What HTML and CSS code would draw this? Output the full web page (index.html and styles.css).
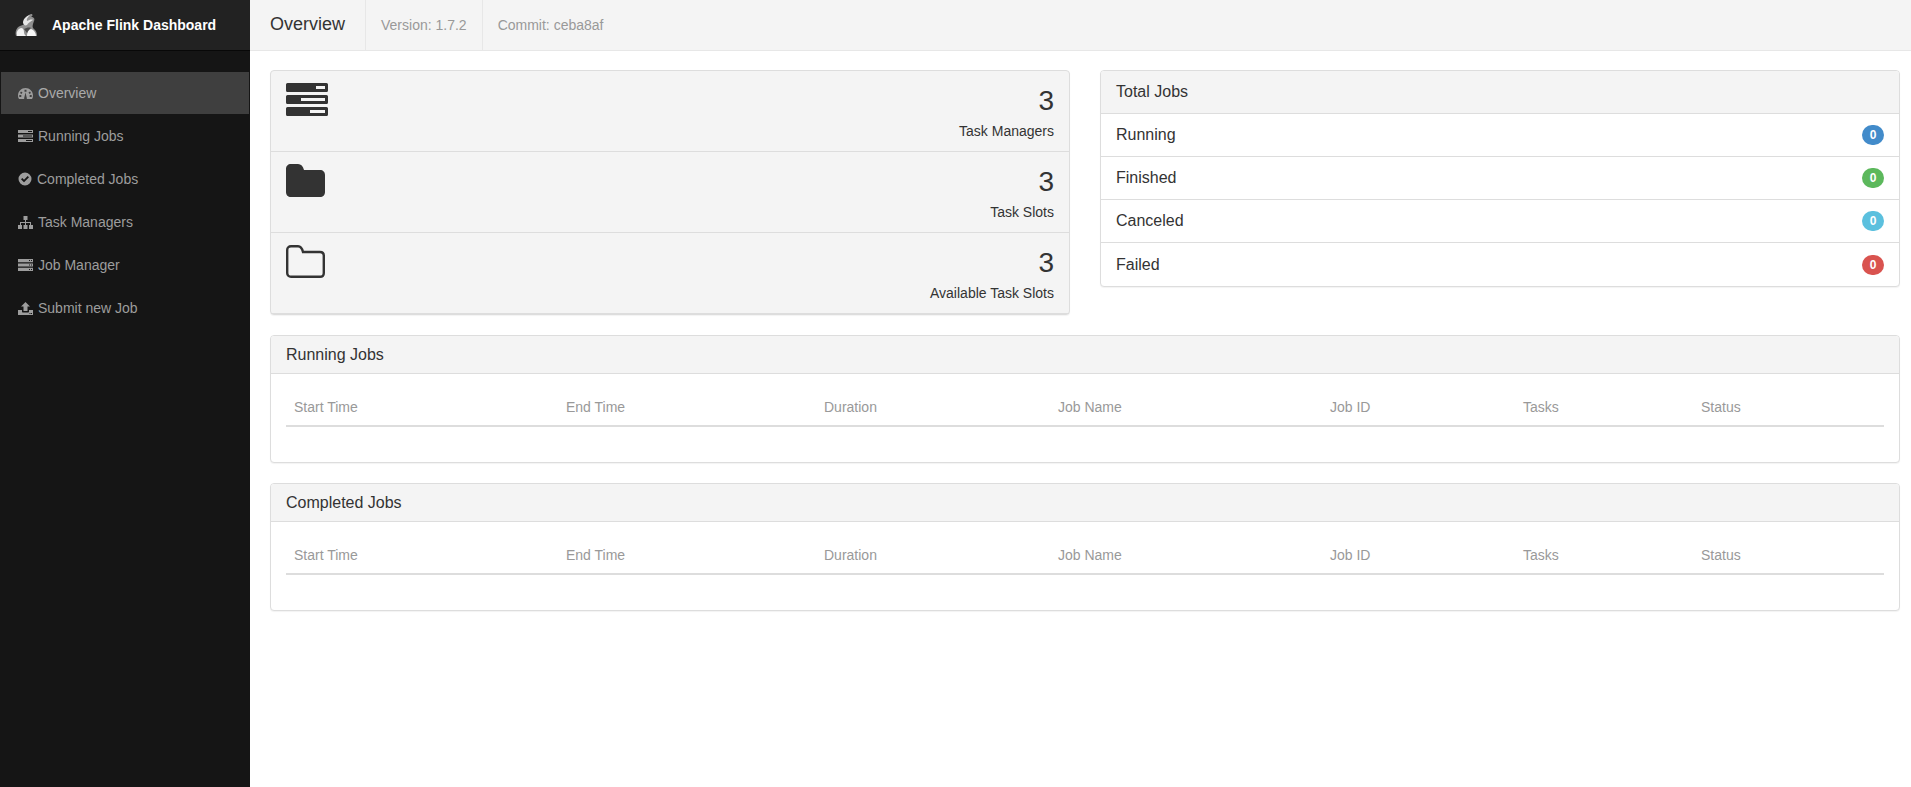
FILE: index.html
```html
<!DOCTYPE html>
<html lang="en">
<head>
    <meta charset="UTF-8">
    <meta name="viewport" content="width=device-width, initial-scale=1.0">
    <title>Apache Flink Dashboard</title>
    <link rel="stylesheet" href="styles.css">
</head>
<body>
    <aside class="sidebar">
        <div class="brand">
            <svg class="brand-logo" viewBox="0 0 22 22" width="22" height="22">
                <path fill="#8f8f8f" d="M1 22c-1-4 0-8 4-10 3-1 5-2 5-4 0-4 3-7 6-8 2 0 2 2 0 3 3 0 4 2 3 4-1 3-2 5-1 7 2 2 4 3 4 8z"/>
                <path fill="#e6e6e6" d="M8 9c0-4 3-7 7-8-2 2-4 4-3 6 2-1 5-2 6-1-2 1-5 3-6 5-2 1-3 0-4-2z"/>
                <path fill="#f2f2f2" d="M2 21c-1-3 1-6 4-7 2 0 3 2 3 4 0 2 1 3 2 4H2z"/>
                <path fill="#f7f7f7" d="M12 22c0-3 1-6 4-7 3 1 5 4 5 7z"/>
                <path fill="#4a4a4a" d="M9 15c2-1 5-2 7-1-2 1-3 3-4 5-1-1-2-3-3-4z"/>
            </svg>
            <span class="brand-name">Apache Flink Dashboard</span>
        </div>
        <ul class="nav">
            <li><a class="nav-link active" href="#">
                <svg class="nav-icon" viewBox="0 0 15 11" width="15" height="11"><path fill-rule="evenodd" d="M7.5 0C3.4 0 0 3.3 0 7.4c0 1.300.3 2.500 1 3.600h13c.7-1.100 1-2.300 1-3.600C15 3.300 11.600 0 7.500 0zM6.500 1.700h2v2h-2zM3 3.400l1.500 1-1 1.500L2 5zM12 3.400L13 5l-1.500.9-1-1.500zM1.300 7h2v2h-2zM11.700 7h2v2h-2zM6.300 9.500l1.200-5 1.200 5a1.300 1.300 0 1 1-2.400 0z"/></svg>
                Overview</a></li>
            <li><a class="nav-link" href="#">
                <svg class="nav-icon" viewBox="0 0 15 12" width="15" height="12"><path fill-rule="evenodd" d="M0 0h15v3H0zM10 1v1h4V1zM0 4.500h15v3H0zM5 5.500v1h9v-1zM0 9h15v3H0zM8 10v1h6v-1z"/></svg>
                Running Jobs</a></li>
            <li><a class="nav-link" href="#">
                <svg class="nav-icon" viewBox="0 0 14 14" width="14" height="14"><path fill-rule="evenodd" d="M7 .5a6.500 6.500 0 1 1 0 13 6.500 6.500 0 0 1 0-13zM6 10.300l5-5-1.300-1.300L6 7.700 4.300 6 3 7.300z"/></svg>
                Completed Jobs</a></li>
            <li><a class="nav-link" href="#">
                <svg class="nav-icon" viewBox="0 0 15 13" width="15" height="13"><path d="M5.500 0h4v4H8v2h5v3h2v4h-4V9h1V7H8v2h1.500v4h-4V9H7V7H3v2h1v4H0V9h2V6h5V4H5.500z"/></svg>
                Task Managers</a></li>
            <li><a class="nav-link" href="#">
                <svg class="nav-icon" viewBox="0 0 15 12" width="15" height="12"><path fill-rule="evenodd" d="M0 0h15v3.200H0zM11 1v1h1V1zM13 1v1h1V1zM0 4.400h15v3.200H0zM11 5.500v1h1v-1zM13 5.500v1h1v-1zM0 8.800h15V12H0zM11 10v1h1v-1zM13 10v1h1v-1z"/></svg>
                Job Manager</a></li>
            <li><a class="nav-link" href="#">
                <svg class="nav-icon" viewBox="0 0 15 13" width="15" height="13"><path fill-rule="evenodd" d="M7.500 0L12 4.500H9.500V9h-4V4.500H3zM0 8h4v1.500c0 .6.400 1 1 1h5c.6 0 1-.4 1-1V8h4v5H0zM11.500 11v1h1v-1zM13 11v1h1v-1z"/></svg>
                Submit new Job</a></li>
        </ul>
    </aside>

    <div class="page">
        <header class="topbar">
            <h1 class="topbar-title">Overview</h1>
            <span class="topbar-info">Version: 1.7.2</span>
            <span class="topbar-info">Commit: ceba8af</span>
        </header>

        <main class="content">
            <div class="summary">
                <div class="panel stats">
                    <div class="stat">
                        <svg class="stat-icon" viewBox="0 0 42 33" width="42" height="33">
                            <path fill="#333" fill-rule="evenodd" d="M1.500 0h39A1.500 1.500 0 0 1 42 1.500v6A1.500 1.500 0 0 1 40.500 9h-39A1.500 1.500 0 0 1 0 7.500v-6A1.500 1.500 0 0 1 1.500 0zM30 3v3h9V3zM1.500 12h39a1.500 1.500 0 0 1 1.500 1.500v6a1.500 1.500 0 0 1-1.500 1.500h-39A1.500 1.500 0 0 1 0 19.500v-6A1.500 1.500 0 0 1 1.500 12zM15 15v3h24v-3zM1.500 24h39a1.500 1.500 0 0 1 1.500 1.500v6a1.500 1.500 0 0 1-1.500 1.500h-39A1.500 1.500 0 0 1 0 31.500v-6A1.500 1.500 0 0 1 1.500 24zM24 27v3h15v-3z"/>
                        </svg>
                        <div class="stat-text">
                            <div class="stat-number">3</div>
                            <div class="stat-label">Task Managers</div>
                        </div>
                    </div>
                    <div class="stat">
                        <svg class="stat-icon" viewBox="0 0 39 33" width="39" height="33">
                            <path fill="#333" d="M5 0h7c3 0 5 2 6 6h16c3 0 5 2 5 5v17c0 3-2 5-5 5H5c-3 0-5-2-5-5V5c0-3 2-5 5-5z"/>
                        </svg>
                        <div class="stat-text">
                            <div class="stat-number">3</div>
                            <div class="stat-label">Task Slots</div>
                        </div>
                    </div>
                    <div class="stat">
                        <svg class="stat-icon" viewBox="0 0 39 33" width="39" height="33">
                            <path fill="none" stroke="#333" stroke-width="2.400" d="M5 1.200h7c2.500 0 4 1.500 5 5.800h17c2.200 0 3.800 1.600 3.800 3.800V28c0 2.200-1.600 3.800-3.800 3.800H5c-2.200 0-3.800-1.600-3.800-3.800V5c0-2.200 1.600-3.800 3.800-3.800z"/>
                        </svg>
                        <div class="stat-text">
                            <div class="stat-number">3</div>
                            <div class="stat-label">Available Task Slots</div>
                        </div>
                    </div>
                </div>

                <div class="panel totals">
                    <div class="panel-heading tall">Total Jobs</div>
                    <div class="total-row">Running <span class="badge running">0</span></div>
                    <div class="total-row">Finished <span class="badge finished">0</span></div>
                    <div class="total-row">Canceled <span class="badge canceled">0</span></div>
                    <div class="total-row">Failed <span class="badge failed">0</span></div>
                </div>
            </div>

            <section class="panel jobs">
                <div class="panel-heading">Running Jobs</div>
                <div class="panel-body">
                    <table class="jobs-table">
                        <colgroup>
                            <col class="col-start"><col class="col-end"><col class="col-duration"><col class="col-name"><col class="col-id"><col class="col-tasks"><col class="col-status">
                        </colgroup>
                        <thead>
                            <tr><th>Start Time</th><th>End Time</th><th>Duration</th><th>Job Name</th><th>Job ID</th><th>Tasks</th><th>Status</th></tr>
                        </thead>
                    </table>
                </div>
            </section>

            <section class="panel jobs">
                <div class="panel-heading">Completed Jobs</div>
                <div class="panel-body">
                    <table class="jobs-table">
                        <colgroup>
                            <col class="col-start"><col class="col-end"><col class="col-duration"><col class="col-name"><col class="col-id"><col class="col-tasks"><col class="col-status">
                        </colgroup>
                        <thead>
                            <tr><th>Start Time</th><th>End Time</th><th>Duration</th><th>Job Name</th><th>Job ID</th><th>Tasks</th><th>Status</th></tr>
                        </thead>
                    </table>
                </div>
            </section>
        </main>
    </div>
</body>
</html>
```

FILE: styles.css
```css
* {
    box-sizing: border-box;
}

html,
body {
    height: 100%;
}

body {
    margin: 0;
    display: flex;
    font-family: "Liberation Sans", Arial, sans-serif;
    font-size: 14px;
    line-height: 20px;
    color: #333;
    background-color: #fff;
    overflow: hidden;
}

/* sidebar */
.sidebar {
    width: 250px;
    flex-shrink: 0;
    background-color: #151515;
}

.brand {
    display: flex;
    align-items: center;
    height: 51px;
    padding-left: 15px;
    background-color: #222;
    border-bottom: 1px solid #080808;
}

.brand-logo {
    margin-right: 15px;
}

.brand-name {
    font-size: 14px;
    font-weight: bold;
    color: #fff;
}

.nav {
    list-style: none;
    margin: 21px 0 0;
    padding: 0;
}

.nav-link {
    display: flex;
    align-items: center;
    height: 42px;
    margin: 0 1px 1px;
    padding-left: 17px;
    color: #9d9d9d;
    text-decoration: none;
}

.nav-link.active {
    background-color: #3f3f3f;
    color: #aaa;
}

.nav-icon {
    flex-shrink: 0;
    margin-right: 5px;
    fill: #9d9d9d;
}

/* top bar */
.page {
    flex: 1;
    min-width: 0;
}

.topbar {
    display: flex;
    height: 51px;
    background-color: #f4f4f4;
    border-bottom: 1px solid #e7e7e7;
}

.topbar-title {
    margin: 0;
    padding: 0 20px;
    font-size: 18px;
    font-weight: normal;
    line-height: 48px;
    border-right: 1px solid #e7e7e7;
}

.topbar-info {
    padding: 0 15px;
    line-height: 50px;
    color: #999;
    border-right: 1px solid #e7e7e7;
}

.topbar-info:last-child {
    border-right: none;
}

/* content */
.content {
    padding: 19px 11px 0 20px;
}

.summary {
    display: grid;
    grid-template-columns: 800px 800px;
    column-gap: 30px;
    align-items: start;
    margin-bottom: 20px;
}

.panel {
    background-color: #fff;
    border: 1px solid #ddd;
    border-radius: 4px;
    box-shadow: 0 1px 1px rgba(0, 0, 0, 0.05);
}

.stats {
    background-color: #f4f4f4;
}

.stat {
    display: flex;
    justify-content: space-between;
    align-items: flex-start;
    height: 81px;
    padding: 12px 15px 0;
    border-bottom: 1px solid #ddd;
}

.stat-text {
    padding-top: 3px;
    text-align: right;
}

.stat-number {
    font-size: 28px;
    line-height: 30px;
    margin-bottom: 5px;
}

.panel-heading {
    display: flex;
    align-items: center;
    height: 38px;
    padding: 0 15px;
    font-size: 16px;
    background-color: #f4f4f4;
    border-bottom: 1px solid #ddd;
    border-radius: 3px 3px 0 0;
}

.panel-heading.tall {
    height: 43px;
}

.total-row {
    display: flex;
    justify-content: space-between;
    align-items: center;
    height: 43px;
    padding: 0 15px;
    font-size: 16px;
    border-bottom: 1px solid #ddd;
}

.total-row:last-child {
    border-bottom: none;
}

.badge {
    min-width: 22px;
    padding: 3px 7px;
    font-size: 12px;
    font-weight: bold;
    line-height: 14px;
    color: #fff;
    text-align: center;
    border-radius: 10px;
}

.badge.running {
    background-color: #428bca;
}

.badge.finished {
    background-color: #5cb85c;
}

.badge.canceled {
    background-color: #5bc0de;
}

.badge.failed {
    background-color: #d9534f;
}

.jobs {
    margin-bottom: 20px;
}

.panel-body {
    padding: 15px 15px 35px;
}

.jobs-table {
    width: 100%;
    table-layout: fixed;
    border-collapse: collapse;
}

.jobs-table th {
    padding: 8px;
    font-weight: normal;
    line-height: 20px;
    text-align: left;
    color: #999;
    border-bottom: 2px solid #ddd;
}

.col-start {
    width: 272px;
}

.col-end {
    width: 258px;
}

.col-duration {
    width: 234px;
}

.col-name {
    width: 272px;
}

.col-id {
    width: 193px;
}

.col-tasks {
    width: 178px;
}

.col-status {
    width: 191px;
}
```
